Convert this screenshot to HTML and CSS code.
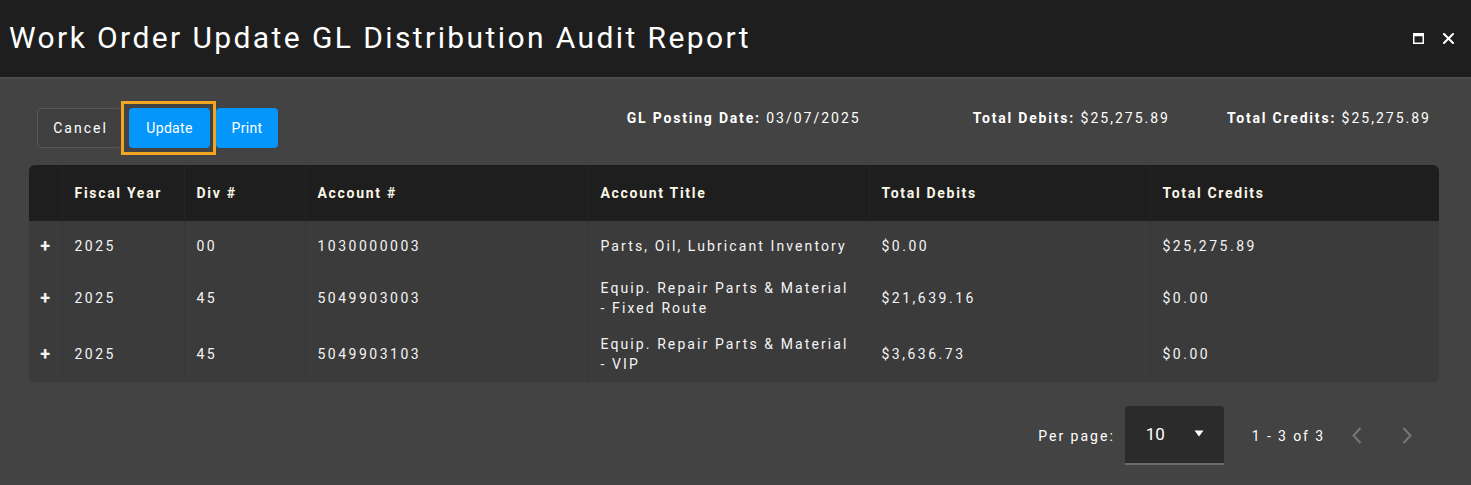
FILE: index.html
```html
<!DOCTYPE html>
<html lang="en">
<head>
<meta charset="utf-8">
<title>Work Order Update GL Distribution Audit Report</title>
<link rel="stylesheet" href="styles.css">
</head>
<body>
<div class="window">
  <header class="titlebar">
    <h1 class="title">Work Order Update GL Distribution Audit Report</h1>
    <div class="win-controls">
      <button class="win-btn" aria-label="Maximize">
        <svg width="11" height="11" viewBox="0 0 11 11"><rect x="0.75" y="0.75" width="9.5" height="9.5" fill="none" stroke="#ffffff" stroke-width="1.5"/><rect x="0.75" y="0.75" width="9.5" height="2.5" fill="#ffffff"/></svg>
      </button>
      <button class="win-btn" aria-label="Close">
        <svg width="11" height="11" viewBox="0 0 11 11"><path d="M1 1 L10 10 M10 1 L1 10" stroke="#ffffff" stroke-width="2" stroke-linecap="square"/></svg>
      </button>
    </div>
  </header>
  <main class="content">
    <div class="toolbar">
      <div class="actions">
        <button class="btn btn-outline">Cancel</button>
        <span class="focus-ring"><button class="btn btn-primary btn-update">Update</button></span>
        <button class="btn btn-primary btn-print">Print</button>
      </div>
      <div class="summary">
        <div class="summary-item sum-date"><b>GL Posting Date:</b> 03/07/2025</div>
        <div class="summary-item sum-debits"><b>Total Debits:</b> $25,275.89</div>
        <div class="summary-item sum-credits"><b>Total Credits:</b> $25,275.89</div>
      </div>
    </div>
    <div class="table-wrap">
      <table class="grid">
        <colgroup>
          <col class="c-exp"><col class="c-fy"><col class="c-div"><col class="c-acct"><col class="c-title"><col class="c-deb"><col class="c-cred">
        </colgroup>
        <thead>
          <tr>
            <th></th>
            <th>Fiscal Year</th>
            <th>Div #</th>
            <th>Account #</th>
            <th>Account Title</th>
            <th>Total Debits</th>
            <th>Total Credits</th>
          </tr>
        </thead>
        <tbody>
          <tr>
            <td class="exp">+</td>
            <td class="num">2025</td>
            <td class="num">00</td>
            <td class="num">1030000003</td>
            <td>Parts, Oil, Lubricant Inventory</td>
            <td class="num">$0.00</td>
            <td class="num">$25,275.89</td>
          </tr>
          <tr>
            <td class="exp">+</td>
            <td class="num">2025</td>
            <td class="num">45</td>
            <td class="num">5049903003</td>
            <td>Equip. Repair Parts &amp; Material<br>- Fixed Route</td>
            <td class="num">$21,639.16</td>
            <td class="num">$0.00</td>
          </tr>
          <tr>
            <td class="exp">+</td>
            <td class="num">2025</td>
            <td class="num">45</td>
            <td class="num">5049903103</td>
            <td>Equip. Repair Parts &amp; Material<br>- VIP</td>
            <td class="num">$3,636.73</td>
            <td class="num">$0.00</td>
          </tr>
        </tbody>
      </table>
    </div>
    <div class="pager">
      <span class="pager-label">Per page:</span>
      <div class="pager-select">
        <span>10</span>
        <svg width="10" height="7" viewBox="0 0 10 7"><path d="M0.5 0.5 L9.5 0.5 L5 6.5 Z" fill="#ffffff"/></svg>
      </div>
      <span class="pager-range">1 - 3 of 3</span>
      <button class="pager-nav" aria-label="Previous page">
        <svg width="10" height="17" viewBox="0 0 10 17"><path d="M8.5 1 L1.5 8.5 L8.5 16" fill="none" stroke="#777777" stroke-width="2"/></svg>
      </button>
      <button class="pager-nav" aria-label="Next page">
        <svg width="10" height="17" viewBox="0 0 10 17"><path d="M1.5 1 L8.5 8.5 L1.5 16" fill="none" stroke="#777777" stroke-width="2"/></svg>
      </button>
    </div>
  </main>
</div>
</body>
</html>
```
FILE: styles.css
```css
* { box-sizing: border-box; }
html, body {
  margin: 0;
  padding: 0;
  background: #434343;
  font-family: Roboto, "Liberation Sans", Arial, sans-serif;
  color: #ffffff;
}
.window {
  width: 1471px;
  height: 485px;
  background: #434343;
  overflow: hidden;
}
.titlebar {
  height: 79px;
  background: #1e1e1e;
  border-bottom: 2px solid #4b4b4b;
  display: flex;
  align-items: center;
  justify-content: space-between;
  padding: 0 12px 0 9px;
}
.title {
  margin: 0;
  font-size: 30px;
  font-weight: 400;
  letter-spacing: 2.4px;
  color: #ffffff;
  padding-bottom: 2px;
  white-space: nowrap;
}
.win-controls {
  display: flex;
  gap: 8px;
  align-items: center;
}
.win-btn {
  background: none;
  border: none;
  padding: 0;
  width: 22px;
  height: 22px;
  display: flex;
  align-items: center;
  justify-content: center;
  cursor: pointer;
}
.content {
  padding: 29px 32px 0 29px;
}
.toolbar {
  display: flex;
  justify-content: space-between;
  align-items: flex-start;
  padding-left: 8px;
}
.actions {
  display: flex;
  align-items: center;
}
.btn {
  height: 40px;
  border-radius: 4px;
  font-family: Roboto, "Liberation Sans", Arial, sans-serif;
  font-size: 14px;
  color: #ffffff;
  cursor: pointer;
  display: block;
}
.btn-outline {
  width: 85px;
  background: #3f3f3f;
  border: 1px solid #575757;
  letter-spacing: 2px;
  padding: 0 0 0 2px;
  margin-right: 7px;
}
.btn-primary {
  background: #0596fb;
  border: none;
  letter-spacing: 0.3px;
}
.focus-ring {
  display: block;
  border: 3px solid #f2a51e;
  padding: 4px 3px 4px 5px;
  margin: -7px -6px -7px -8px;
}
.btn-update { width: 81px; }
.btn-print { width: 62px; margin-left: 6px; }
.summary {
  display: flex;
  font-size: 14px;
  letter-spacing: 2px;
  padding-top: 2px;
  padding-right: 8px;
}
.summary-item { white-space: nowrap; }
.summary-item b { font-weight: 700; letter-spacing: 1.8px; }
.sum-debits { margin-left: 112px; }
.sum-credits { margin-left: 57px; }
.table-wrap {
  margin-top: 17px;
  border-radius: 6px;
  overflow: hidden;
  background: #3b3b3b;
}
.grid {
  width: 1410px;
  border-collapse: collapse;
  table-layout: fixed;
  font-size: 14px;
  letter-spacing: 2.1px;
}
.c-exp { width: 33px; }
.c-fy { width: 122px; }
.c-div { width: 121px; }
.c-acct { width: 283px; }
.c-title { width: 281px; }
.c-deb { width: 281px; }
.c-cred { width: 289px; }
.grid th {
  height: 56px;
  background: #1e1e1e;
  text-align: left;
  font-weight: 700;
  color: #fbf6e6;
  letter-spacing: 1.7px;
  padding: 0 12px;
  border-right: 1px solid #242424;
}
.grid td {
  height: 49px;
  padding: 8px 12px;
  line-height: 20px;
  vertical-align: middle;
  color: #f4f4f4;
  border-right: 1px solid #373737;
  white-space: nowrap;
}
.grid td.num { letter-spacing: 2.5px; }
.grid th:last-child, .grid td:last-child { border-right: none; }
.grid tbody tr:nth-child(2) td { height: 56px; }
.grid tbody tr:nth-child(3) td { height: 55px; }
.grid td.exp {
  padding: 0;
  text-align: center;
  font-size: 18px;
  font-weight: 700;
  letter-spacing: 0;
}
.pager {
  margin-top: 24px;
  display: flex;
  justify-content: flex-end;
  align-items: center;
  padding-right: 8px;
}
.pager-label {
  font-size: 14px;
  letter-spacing: 2px;
  margin-right: 10px;
}
.pager-select {
  width: 99px;
  height: 59px;
  background: #2b2b2b;
  border-radius: 4px 4px 0 0;
  border-bottom: 2px solid #6a6a6a;
  display: flex;
  align-items: center;
  justify-content: space-between;
  padding: 0 20px 2px 21px;
  font-size: 17px;
}
.pager-range {
  font-size: 14px;
  letter-spacing: 1.9px;
  margin-left: 28px;
  margin-right: 6px;
}
.pager-nav {
  width: 48px;
  height: 40px;
  background: none;
  border: none;
  display: flex;
  align-items: center;
  justify-content: center;
  padding: 0;
  margin-left: 2px;
}
```
